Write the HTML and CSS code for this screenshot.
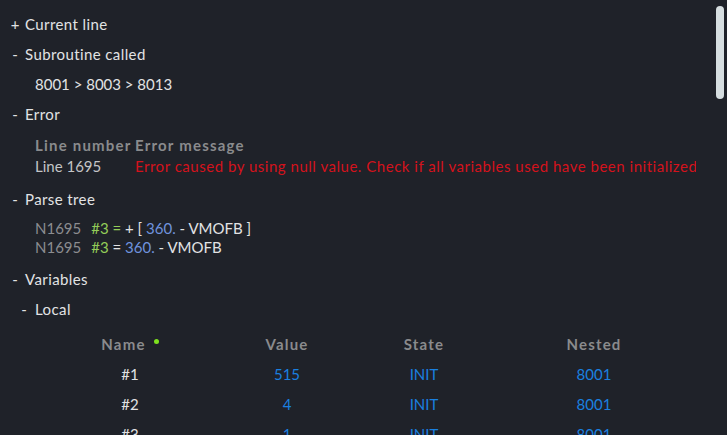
FILE: index.html
```html
<!DOCTYPE html>
<html>
<head>
<meta charset="utf-8">
<link rel="stylesheet" href="styles.css">
</head>
<body>
<div class="panel">
  <div class="tree">
    <div class="node"><span class="tog">+</span>Current line</div>
    <div class="node"><span class="tog">-</span>Subroutine called</div>
    <div class="content line">8001 &gt; 8003 &gt; 8013</div>
    <div class="node"><span class="tog">-</span>Error</div>
    <div class="content errtable">
      <div class="eh">Line number</div>
      <div class="eh">Error message</div>
      <div class="ecell">Line 1695</div>
      <div class="ecell emsg">Error caused by using null value. Check if all variables used have been initialized</div>
    </div>
    <div class="node"><span class="tog">-</span>Parse tree</div>
    <div class="content parse">
      <div class="prow"><span class="pn">N1695</span><span class="pg">#3 =</span> + [ <span class="pb">360.</span> - VMOFB ]</div>
      <div class="prow"><span class="pn">N1695</span><span class="pg">#3</span> = <span class="pb">360.</span> - VMOFB</div>
    </div>
    <div class="node"><span class="tog">-</span>Variables</div>
    <div class="node sub"><span class="tog">-</span>Local</div>
    <div class="vartable">
      <div class="vh">Name<span class="dot"></span></div>
      <div class="vh">Value</div>
      <div class="vh">State</div>
      <div class="vh">Nested</div>
      <div class="vc">#1</div><div class="vc blue">515</div><div class="vc blue">INIT</div><div class="vc blue">8001</div>
      <div class="vc">#2</div><div class="vc blue">4</div><div class="vc blue">INIT</div><div class="vc blue">8001</div>
      <div class="vc">#3</div><div class="vc blue">1</div><div class="vc blue">INIT</div><div class="vc blue">8001</div>
    </div>
  </div>
  <div class="thumb"></div>
</div>
</body>
</html>
```

FILE: styles.css
```css
html, body {
  margin: 0;
  padding: 0;
  background: #1f2229;
}
body {
  font-family: Lato, "Noto Sans", sans-serif;
  font-size: 15px;
  letter-spacing: 0.4px;
  color: #e2e3e4;
}
.panel {
  position: relative;
  width: 727px;
  height: 435px;
  overflow: hidden;
}
.tree {
  padding-top: 9px;
}
.node {
  height: 30px;
  line-height: 30px;
  padding-left: 8px;
  white-space: nowrap;
}
.node.sub {
  padding-left: 18px;
}
.tog {
  display: inline-block;
  width: 14px;
  margin-right: 3px;
  text-align: center;
  letter-spacing: 0;
}
.node.sub .tog {
  width: 12px;
  margin-right: 5px;
}
.content {
  padding-left: 35px;
}
.line {
  height: 30px;
  line-height: 30px;
  letter-spacing: 0;
}
.errtable {
  display: grid;
  grid-template-columns: 100px 561px;
  grid-auto-rows: 21px;
  line-height: 21px;
  padding-top: 6px;
  padding-bottom: 7px;
}
.eh {
  color: #8a8b8d;
  font-weight: 700;
  letter-spacing: 1.2px;
  white-space: nowrap;
}
.ecell {
  color: #c4c5c7;
  white-space: nowrap;
  overflow: hidden;
  letter-spacing: 0;
}
.emsg {
  color: #d4121c;
  letter-spacing: 0.52px;
}
.parse {
  padding-top: 5px;
  padding-bottom: 7px;
  letter-spacing: 0;
}
.prow {
  height: 19px;
  line-height: 19px;
  white-space: nowrap;
}
.pn {
  color: #8c8d90;
  margin-right: 10px;
}
.pg {
  color: #93cc58;
}
.pb {
  color: #7093de;
}
.vartable {
  display: grid;
  grid-template-columns: 190px 124px 150px 190px;
  grid-auto-rows: 30px;
  line-height: 30px;
  margin-left: 35px;
  margin-top: 5px;
  text-align: center;
}
.vh {
  color: #8a8b8d;
  font-weight: 700;
  letter-spacing: 1.2px;
}
.vc {
  color: #e2e3e4;
  letter-spacing: 0;
}
.vc.blue {
  color: #1a80e0;
}
.dot {
  display: inline-block;
  width: 5px;
  height: 5px;
  border-radius: 50%;
  background: #7ee21e;
  margin-left: 8px;
  vertical-align: 6px;
}
.thumb {
  position: absolute;
  left: 716px;
  top: 6px;
  width: 8px;
  height: 93px;
  border-radius: 4px;
  background: #d6dee0;
}
```
